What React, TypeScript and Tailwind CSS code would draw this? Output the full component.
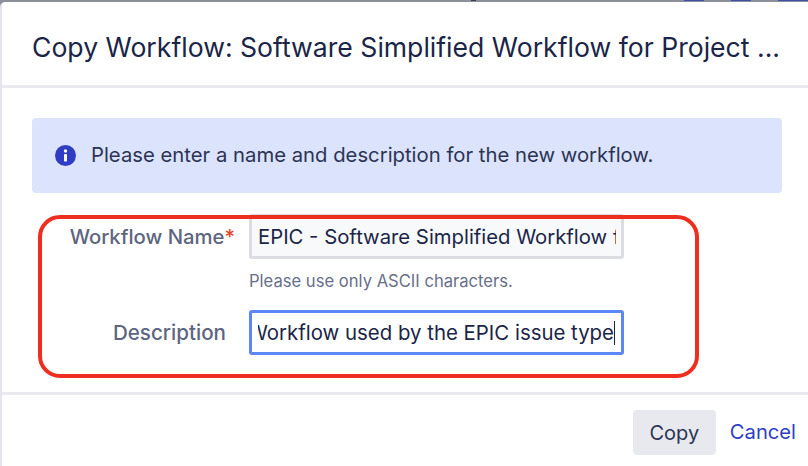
export default function App() {
  return (
    <div className="relative w-[808px] h-[466px] overflow-hidden bg-[#8c8e9c] font-['Inter',sans-serif]">
      {/* bottoms of the page text behind the dialog */}
      <div className="h-[2px] overflow-hidden flex items-start pl-[471px] gap-[208px]">
        <span className="w-[9px] h-[1px] bg-[#3c3f52]" />
        <span className="flex gap-[27px]">
          <span className="w-[20px] h-[1px] bg-[#3f4ea3]" />
          <span className="w-[20px] h-[1px] bg-[#3f4ea3]" />
          <span className="w-[30px] h-[1px] bg-[#3f4ea3]" />
        </span>
      </div>
      <div className="h-[464px] rounded-tl-[5px] border-l-2 border-[#e4e5ee] bg-white flex flex-col">
        <header className="h-[86px] shrink-0 border-b-[3px] border-[#e9e9ef] pl-[30px] pt-[27px]">
          <h2 className="text-[26.6px] leading-[36px] text-[#1a2547] whitespace-nowrap">
            Copy Workflow: Software Simplified Workflow for Project ...
          </h2>
        </header>

        <div className="flex-1 pl-[30px] pr-[26px] pt-[30px]">
          <div className="h-[75px] rounded-[4px] bg-[#dce3fd] flex items-center gap-[15px] pl-[23px]">
            <svg width="21" height="21" viewBox="0 0 21 21">
              <circle cx="10.5" cy="10.5" r="10.5" fill="#2f3dc4" />
              <circle cx="10.5" cy="6" r="1.7" fill="#fff" />
              <rect x="9" y="9" width="3" height="7.5" rx="0.8" fill="#fff" />
            </svg>
            <p className="text-[20.3px] text-[#2b3454]">Please enter a name and description for the new workflow.</p>
          </div>

          <div className="mt-[21px] flex items-start">
            <label className="w-[203px] h-[45px] pt-[1px] flex items-center justify-end text-[20.3px] font-medium text-[#5d6580] whitespace-nowrap">
              Workflow Name<span className="text-[#e0492e]">*</span>
            </label>
            <div className="ml-[14px]">
              <div className="w-[375px] h-[45px] rounded-[3px] border-[3px] border-[#dcdde3] bg-[#f8f9fb] flex items-center pl-[6px] pr-[5px] pt-[1px] text-[20.3px] text-[#1a2547]">
                <span className="block overflow-hidden whitespace-nowrap">EPIC - Software Simplified Workflow for</span>
              </div>
              <p className="mt-[12px] text-[16.6px] leading-[20px] text-[#686f88] whitespace-nowrap">Please use only ASCII characters.</p>
            </div>
          </div>

          <div className="mt-[19px] flex items-start">
            <label className="w-[194px] h-[45px] pt-[1px] flex items-center justify-end text-[20.6px] font-medium text-[#5d6580]">
              Description
            </label>
            <div className="ml-[23px] w-[375px] h-[45px] rounded-[3px] border-[3px] border-[#5c87f7] bg-white flex items-center pl-[6px] pr-[6px] pt-[1px] text-[20.4px] text-[#1a2547]">
              <span className="flex flex-1 justify-end overflow-hidden whitespace-nowrap">
                <span className="shrink-0">Workflow used by the EPIC issue type</span>
              </span>
              <span className="w-px h-[24px] bg-[#1a2547] shrink-0" />
            </div>
          </div>
        </div>

        <footer className="h-[74px] shrink-0 border-t-[3px] border-[#e9e9ef] flex items-start justify-end gap-[14px] pr-[12px] pt-[15px]">
          <button className="w-[83px] h-[45px] rounded-[4px] bg-[#e8e9ee] text-[20px] text-[#2b3454]">Copy</button>
          <a className="h-[45px] flex items-center text-[20.2px] text-[#2f3dc4]">Cancel</a>
        </footer>
      </div>

      {/* red annotation drawn over the form */}
      <div className="absolute left-[38px] top-[215px] w-[661px] h-[163px] rounded-[22px] border-[4px] border-[#ee2f1f]" />
    </div>
  );
}
